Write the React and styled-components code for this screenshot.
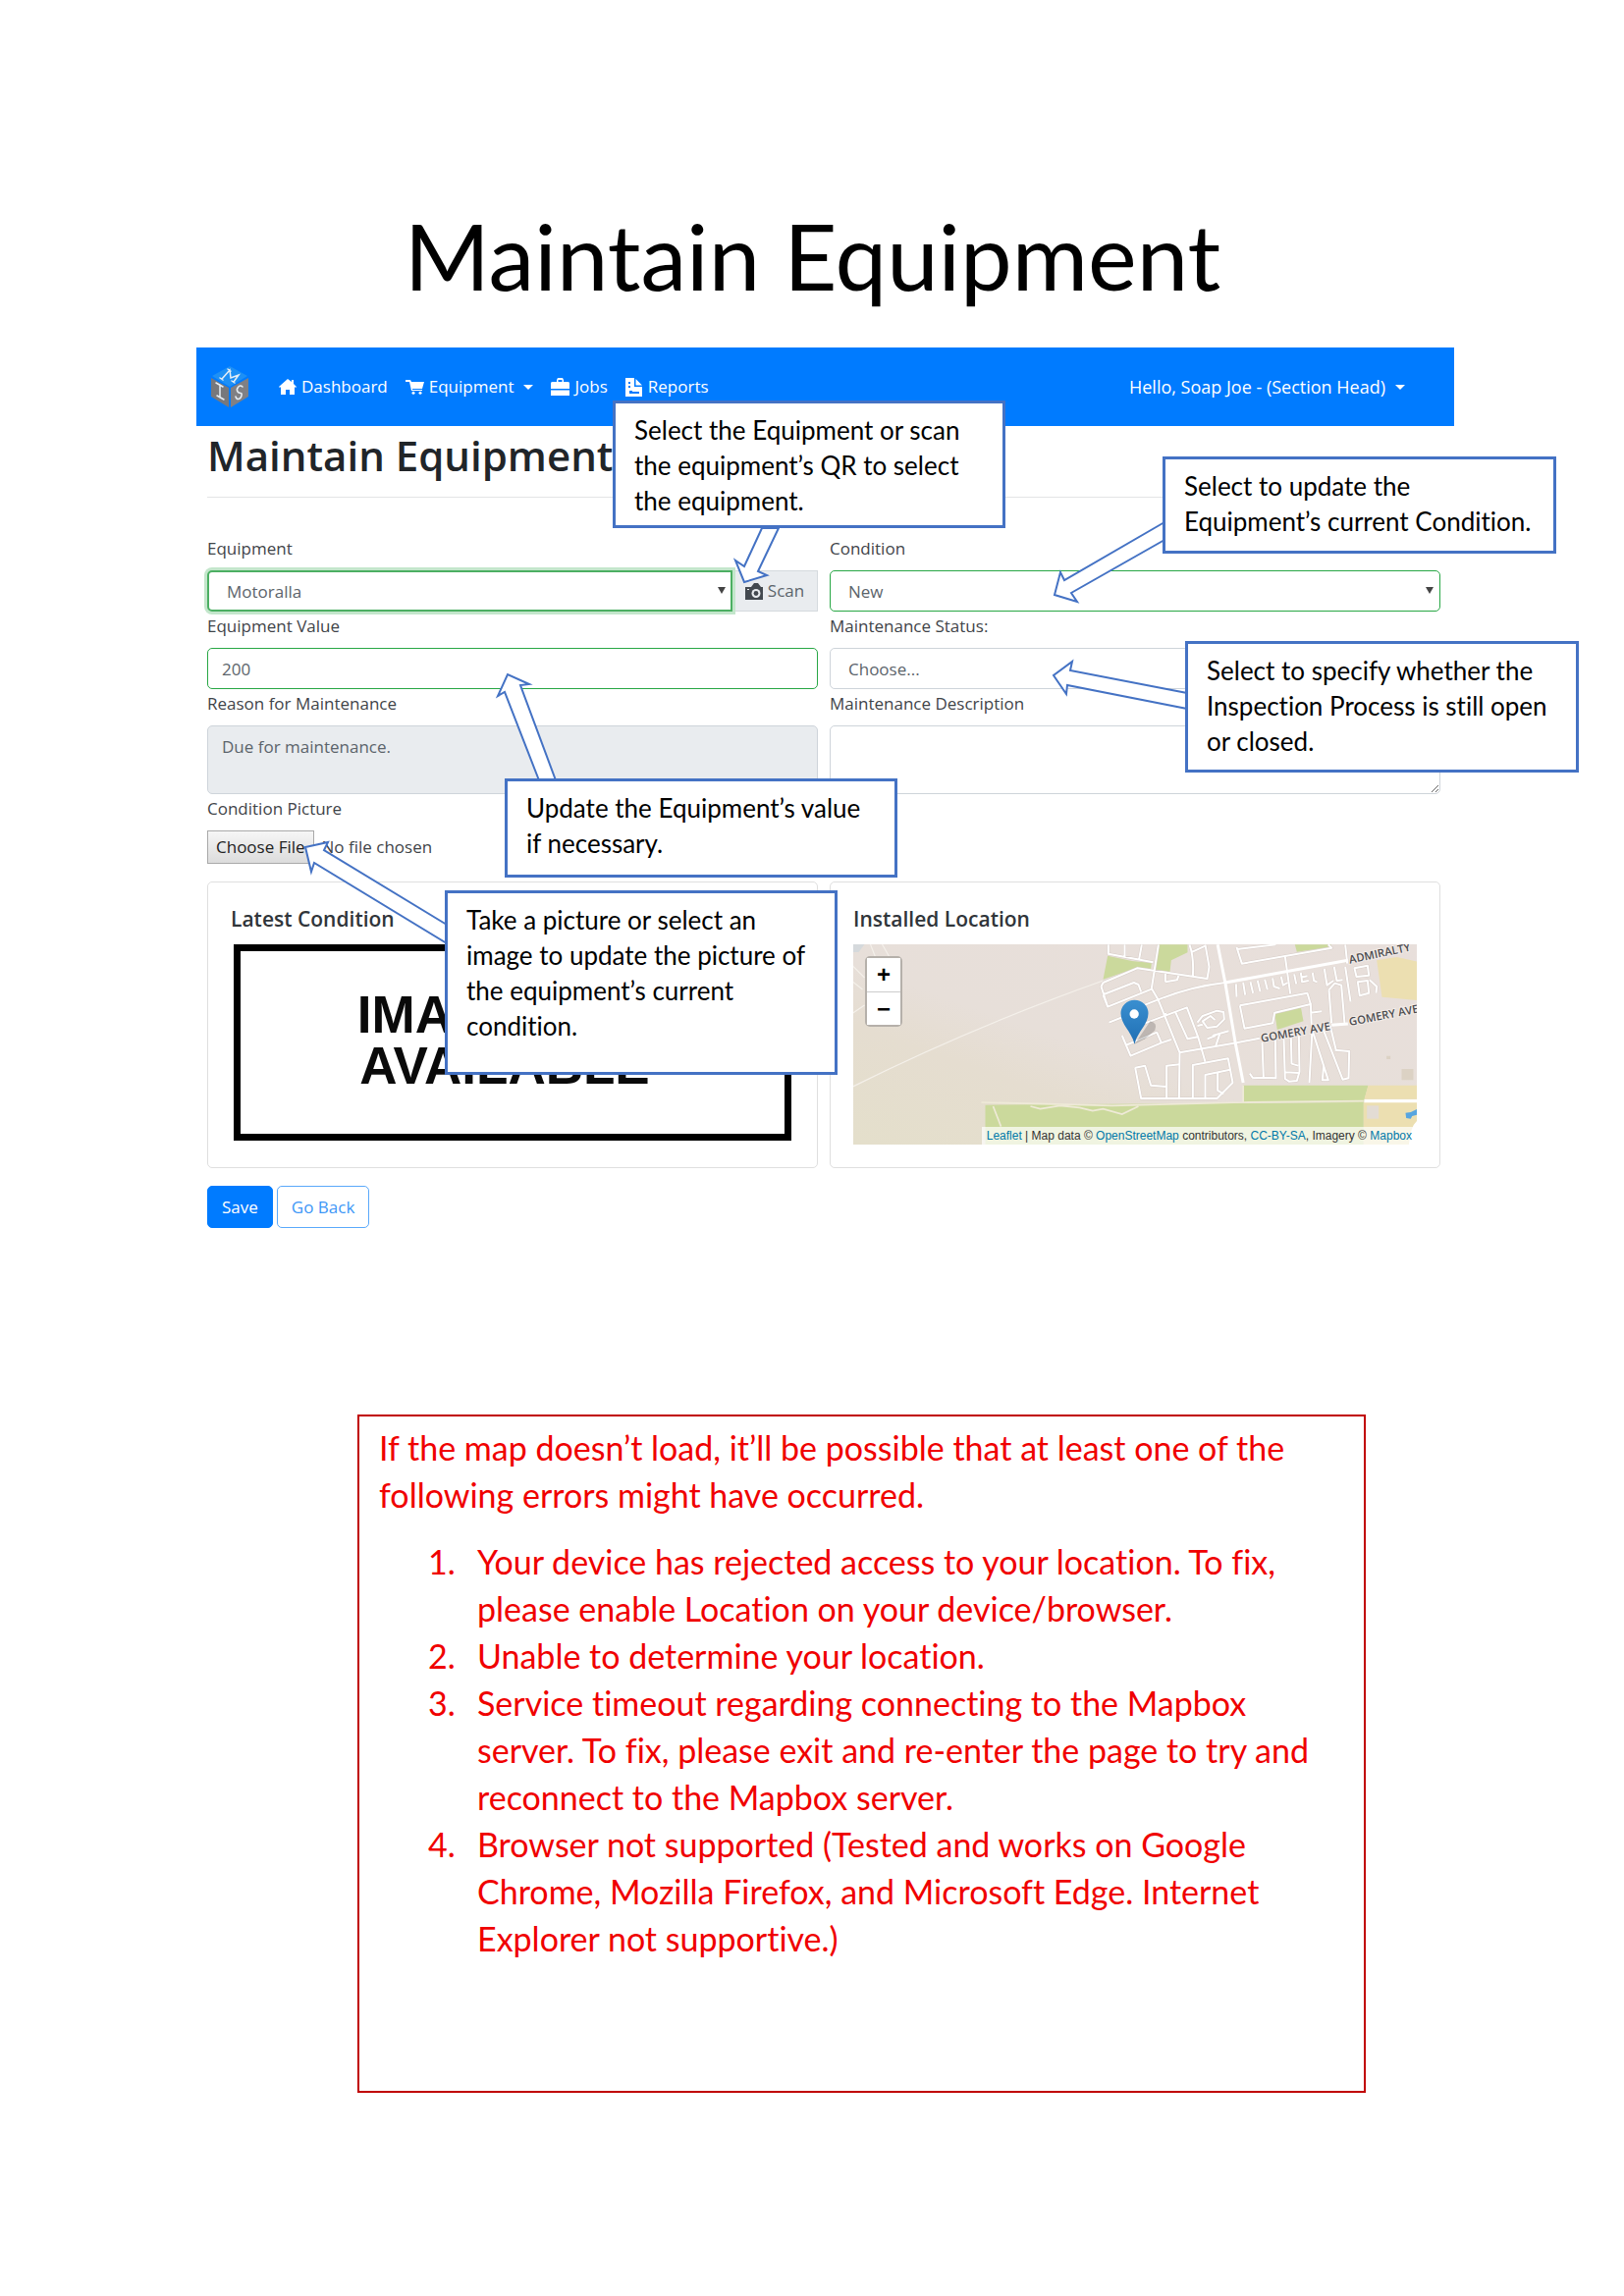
import React from "react";
import styled, { createGlobalStyle, css } from "styled-components";

const GlobalStyle = createGlobalStyle`
  *, *::before, *::after { box-sizing: border-box; }
  body {
    margin: 0;
    background: #fff;
    color: #212529;
    font-family: "Open Sans", "Noto Sans", sans-serif;
  }
`;

const docFont = css`
  font-family: Lato, "Open Sans", sans-serif;
  font-variant-ligatures: none;
`;

/* ---------- document ---------- */
const Page = styled.main`
  padding: 192px 173px 207px 200px;
`;
const DocTitle = styled.h1`
  ${docFont}
  margin: 0 0 26px;
  padding-right: 26px;
  font-size: 94px;
  line-height: 136px;
  font-weight: 400;
  text-align: center;
  color: #000;
`;
const Shot = styled.section`
  position: relative;
`;

/* ---------- navigation ---------- */
const NavBar = styled.nav`
  display: flex;
  align-items: center;
  height: 80px;
  padding: 0 50px 0 15px;
  background: #007bff;
`;
const NavList = styled.div`
  display: flex;
  align-items: center;
  gap: 18px;
  flex: 1;
  margin-left: 31px;
`;
const NavLink = styled.a`
  display: inline-flex;
  align-items: center;
  gap: 5px;
  color: #fff;
  font-size: ${(p) => (p.$large ? 18 : 17)}px;
  line-height: 26px;
  text-decoration: none;
  white-space: nowrap;
`;
const Caret = styled.span`
  margin-left: 5px;
  border: 5px solid transparent;
  border-top-color: #fff;
  border-bottom: 0;
`;

/* ---------- form ---------- */
const Content = styled.div`
  padding: 0 14px 0 11px;
`;
const Heading = styled.h2`
  margin: 0 0 12px;
  font-size: 42px;
  line-height: 60px;
  font-weight: 600;
`;
const Rule = styled.hr`
  height: 1px;
  margin: 0 0 37px;
  border: 0;
  background: #e3e4e5;
`;
const Columns = styled.div`
  display: grid;
  grid-template-columns: 1fr 1fr;
  column-gap: 12px;
`;
const Label = styled.label`
  display: block;
  margin-bottom: 7px;
  font-size: 17px;
  line-height: 30px;
  color: #3f4449;
`;
const Group = styled.div`
  display: flex;
`;
const controlStyle = css`
  display: block;
  width: 100%;
  margin: 0;
  border: 1px solid ${(p) => (p.$valid ? "#28a745" : "#ced4da")};
  border-radius: 5px;
  background: #fff;
  color: #5c646b;
  font: 17px/24px "Open Sans", "Noto Sans", sans-serif;
  outline: 0;
`;
const SelectBox = styled.div`
  position: relative;
  flex: 1;
  &::after {
    content: "";
    position: absolute;
    right: 7px;
    top: 17px;
    border: 4px solid transparent;
    border-top: 7px solid #444;
    border-bottom: 0;
  }
`;
const Select = styled.select`
  ${controlStyle}
  appearance: none;
  height: 42px;
  padding: 2px 18px 0;
  ${(p) =>
    p.$focused &&
    css`
      border-width: 2px;
      border-color: #4caf63;
      border-radius: 5px 0 0 5px;
      box-shadow: 0 0 0 3px #c3e6cb;
    `}
`;
const Input = styled.input`
  ${controlStyle}
  height: 42px;
  padding: 0 14px;
`;
const TextArea = styled.textarea`
  ${controlStyle}
  height: 70px;
  padding: 9px 14px;
  resize: ${(p) => (p.readOnly ? "none" : "vertical")};
  background: ${(p) => (p.readOnly ? "#e9ecef" : "#fff")};
`;
const ScanButton = styled.button`
  display: flex;
  align-items: center;
  justify-content: center;
  gap: 5px;
  width: 87px;
  height: 42px;
  padding: 0;
  border: 1px solid #d5dade;
  border-left: 0;
  background: #e9ecef;
  color: #5c646b;
  font: 17px/24px "Open Sans", "Noto Sans", sans-serif;
`;
const FileInput = styled.input`
  display: block;
  width: 100%;
  height: 34px;
  margin: 0;
  color: #3f4449;
  font: 17px/24px "Open Sans", "Noto Sans", sans-serif;
  &::file-selector-button {
    height: 34px;
    margin: 0 8px 0 0;
    padding: 0 8px;
    border: 1px solid #a9a9a9;
    border-radius: 0;
    background: linear-gradient(#f6f6f6, #dcdcdc);
    color: #222;
    font: 17px/24px "Open Sans", "Noto Sans", sans-serif;
  }
`;

/* ---------- cards ---------- */
const Cards = styled(Columns)`
  margin: 18px 0;
`;
const Card = styled.article`
  padding: 23px;
  border: 1px solid #dfdfdf;
  border-radius: 5px;
`;
const CardTitle = styled.h3`
  margin: 0 0 12px;
  font-size: 21px;
  line-height: 28px;
  font-weight: 600;
  color: #30353a;
`;
const NoImage = styled.div`
  display: flex;
  align-items: center;
  justify-content: center;
  height: 200px;
  margin: 2px 3px;
  padding: 0 16px 4px 0;
  border: 7px solid #000;
  color: #0a0a0a;
  font: 700 53px/52px "Liberation Sans", Arial, sans-serif;
  text-align: center;
`;
const MapBox = styled.div`
  position: relative;
  height: 204px;
  overflow: hidden;
`;
const ZoomControl = styled.div`
  position: absolute;
  left: 12px;
  top: 12px;
  display: flex;
  flex-direction: column;
  border: 2px solid #b5b0aa;
  border-radius: 5px;
`;
const ZoomButton = styled.button`
  width: 34px;
  height: 34px;
  padding: 0;
  border: 0;
  background: #fff;
  color: #000;
  font: 700 24px/32px "Liberation Sans", Arial, sans-serif;
  & + & {
    border-top: 1px solid #ccc;
  }
`;
const Attribution = styled.div`
  position: absolute;
  right: 0;
  bottom: 0;
  padding: 0 5px;
  background: rgba(255, 255, 255, 0.7);
  color: #333;
  font: 12px/18px "Liberation Sans", Arial, sans-serif;
  white-space: nowrap;
  a {
    color: #0078a8;
    text-decoration: none;
  }
`;

const Actions = styled.div`
  display: flex;
  gap: 4px;
`;
const Button = styled.button`
  height: 43px;
  padding: 0 14px;
  border: 1px solid ${(p) => (p.$primary ? "#007bff" : "#5aa9fb")};
  border-radius: 5px;
  background: ${(p) => (p.$primary ? "#007bff" : "#fff")};
  color: ${(p) => (p.$primary ? "#fff" : "#3d97f7")};
  font: 17px/24px "Open Sans", "Noto Sans", sans-serif;
`;

/* ---------- annotations ---------- */
const Arrows = styled.svg`
  position: absolute;
  left: 0;
  top: 0;
  overflow: visible;
  pointer-events: none;
`;
const Callout = styled.aside`
  ${docFont}
  position: absolute;
  left: ${(p) => p.$x}px;
  top: ${(p) => p.$y}px;
  width: ${(p) => p.$w}px;
  height: ${(p) => p.$h}px;
  padding: 9px 19px;
  border: 3px solid #4472c4;
  background: #fff;
  color: #000;
  font-size: 26px;
  line-height: 36px;
  white-space: nowrap;
`;
const Notice = styled.section`
  ${docFont}
  margin: 190px 90px 0 164px;
  min-height: 691px;
  padding: 8px 20px;
  border: 2px solid #c00000;
  color: #f00000;
  font-size: 34px;
  line-height: 48px;
  p {
    margin: 0 0 20px;
  }
  ol {
    margin: 0;
    padding-left: 50px;
    list-style: none;
    counter-reset: cause;
  }
  li {
    display: flex;
    counter-increment: cause;
  }
  li::before {
    content: counter(cause) ".";
    flex: 0 0 50px;
  }
`;

const arrowShapes = [
  "776,538 758,577 749,571 758,593 781,586 772,582 793,538",
  "1186,532 1084,591 1080,583 1074,606 1097,613 1091,604 1186,550",
  "1209,706 1090,683 1092,674 1073,688 1086,707 1087,698 1209,722",
  "549,795 514,705 507,709 517,687 539,697 530,698 566,795",
  "455,942 330,866 334,858 311,863 317,888 320,879 455,961",
];

const callouts = [
  { x: 424, y: 54, w: 400, h: 130, lines: ["Select the Equipment or scan", "the equipment’s QR to select", "the equipment."] },
  { x: 984, y: 111, w: 401, h: 99, lines: ["Select to update the", "Equipment’s current Condition."] },
  { x: 1007, y: 299, w: 401, h: 134, lines: ["Select to specify whether the", "Inspection Process is still open", "or closed."] },
  { x: 314, y: 439, w: 400, h: 101, lines: ["Update the Equipment’s value", "if necessary."] },
  { x: 253, y: 553, w: 400, h: 188, lines: ["Take a picture or select an", "image to update the picture of", "the equipment’s current", "condition."] },
];

const Logo = () => (
  <svg width="38" height="42" viewBox="0 0 38 42" role="img" aria-label="MIS">
    <path d="M19 0 37 10 19 21 1 10Z" fill="#1e90f5" />
    <path d="M0 12 18 22V42L0 31Z" fill="#77787c" />
    <path d="M38 12 20 22V42L38 31Z" fill="#808084" />
    <g fill="none" stroke="#e6eef5" strokeWidth="1.5" strokeLinecap="round">
      <path d="M11 13 19 4 20 12 28 9 23 16M17 3l3 2M9 12l3 2M21 15l3 2" />
      <path d="M5 17l7 4M6 30l7 4M9 19v13" />
      <path d="M32 21c-3-3-7 2-5 5s5 0 4 4-5 5-6 1" />
    </g>
  </svg>
);
const HomeIcon = () => (
  <svg width="18" height="18" viewBox="0 0 18 18" fill="#fff" aria-hidden="true">
    <path d="M9 1 0 9l1 1 1-1v8h5v-5h4v5h5V9l1 1 1-1-3-3V2h-2v2Z" />
  </svg>
);
const CartIcon = () => (
  <svg width="19" height="16" viewBox="0 0 19 16" fill="#fff" aria-hidden="true">
    <path d="M0 1h5l1 2h13l-2 7H7v1h10v1H6L4 3H0Z" />
    <circle cx="8" cy="14.300" r="1.500" />
    <circle cx="15" cy="14.300" r="1.500" />
  </svg>
);
const CaseIcon = () => (
  <svg width="19" height="19" viewBox="0 0 19 19" fill="#fff" aria-hidden="true">
    <path fillRule="evenodd" d="M6 4V2l1-2h5l1 2v2h5l1 1v6H0V5l1-1ZM7.500 4h4V2h-4ZM0 12.500h19V18H0Z" />
  </svg>
);
const ReportIcon = () => (
  <svg width="18" height="19" viewBox="0 0 18 19" fill="#fff" aria-hidden="true">
    <path fillRule="evenodd" d="M0 0h9v9h8v10H0ZM3 4v2h2V4ZM3 8v2h2V8ZM4 13v3h10v-2H7v-1Z" />
    <path d="M10.500 1 17 7.500h-6.500Z" />
  </svg>
);
const CameraIcon = () => (
  <svg width="18" height="19" viewBox="0 0 18 19" aria-hidden="true">
    <path d="M0 5h6l3-4h4l3 4h2v13H0Z" fill="#43494f" />
    <circle cx="11" cy="11.500" r="4.500" fill="#e9ecef" />
    <circle cx="11" cy="11.500" r="2.400" fill="#43494f" />
    <path d="M2 7h2v1H2Z" fill="#e9ecef" />
  </svg>
);

const roads = [
  "M388 22V50L525 76M438 22V60M490 22 482 66M541 22 520 156 540 190M372 138 476 94 690 126 696 90 684 22M636 22Q650 60 646 118M684 26 640 46M366 150 386 212 520 158M372 138 366 150M374 174 466 138 480 144 488 166M386 212 372 176M562 136V106M562 136 598 130 604 112",
  "M390 260 440 240M500 206 540 190Q640 150 745 138M540 190 606 352 604 492M606 352 780 322 850 308M500 262 628 214 662 304 630 310 592 226M556 238 566 232M662 304 684 380M430 300 456 362 550 322 536 290 440 330M456 362 550 322 580 312",
  "M660 260 676 240 720 224 740 228 742 250 720 272 690 276 676 256 700 240 714 252M660 270 676 266M706 300 756 286M728 296 716 332M690 310 716 300",
  "M470 398 500 392 518 452 566 456M470 398 488 492H720L768 444 754 370 646 390V492M566 492V392L606 388M684 492V420L760 404M722 414V468L740 478",
  "M780 30 796 80 1070 32 1060 22M928 58 944 172M782 36 900 22M1112 22 1118 80",
  "M790 208 996 170 1006 204 896 230 890 262 804 278 790 208M1006 200 1010 300 1002 444M1006 230 1040 226",
  "M778 142 780 182M800 138 806 176M822 136 830 170M844 132 852 166M866 128 874 160M890 124 894 150 912 156M916 120 922 146 936 138M956 112 962 142M976 108 980 136 1000 132M976 122 996 118M1012 108 1016 132 1026 136M1048 96 1056 146 1076 132M1078 90 1086 132 1104 130M1112 90 1128 196",
  "M1062 160 1080 140 1100 146 1110 264M1062 160 1070 262M1140 94 1180 86 1184 116 1146 120ZM1150 136 1180 132 1184 170 1156 178ZM1186 130 1208 150 1206 170",
  "M858 320 862 428 830 430M830 430 820 416M862 428 900 430 898 300M924 310 928 432 940 440 964 438 972 410 970 300M946 306 948 386 968 392M930 412 970 414M1010 280 1060 436 1042 436 1046 390M1044 280 1104 434 1122 430 1124 348 1080 344M1066 270 1084 346",
];

const StreetMap = () => (
  <svg width="100%" height="204" viewBox="0 0 575 204" preserveAspectRatio="xMidYMid slice" role="img" aria-label="Map of the installed location">
    <defs>
      <linearGradient id="land" x1="0" y1="1" x2="1" y2="0">
        <stop offset="0" stopColor="#e4dfcb" />
        <stop offset="0.300" stopColor="#e5ddd0" />
        <stop offset="0.450" stopColor="#e7dfd9" />
        <stop offset="1" stopColor="#e8dfdb" />
      </linearGradient>
      <linearGradient id="pin" x1="0" y1="0" x2="0" y2="1">
        <stop offset="0" stopColor="#3a8fd0" />
        <stop offset="1" stopColor="#1f6fb4" />
      </linearGradient>
    </defs>
    <rect width="575" height="204" fill="url(#land)" />
    <path d="M0 0h12L6 8H0Z" fill="#d5d9dc" />
    <g fill="none" stroke="#f4f0ea" strokeWidth="1.200">
      <path d="M18 0 25 18M30 0l8 14M0 22l12 12M0 38l10 8M0 145Q120 85 255 37M0 70l12-8" />
    </g>
    <g transform="translate(131 -7) scale(0.33333)">
      <g fill="#cbd99c">
        <path d="M386 56 460 72 520 78 518 96 476 92 372 128Z" />
        <path d="M541 22H630V46L580 70 576 106 530 98Z" />
        <path d="M958 22H1070L1060 30 964 44Z" />
        <path d="M896 228 976 212 984 256 904 282Z" />
        <path d="M800 452H1182L1168 504H800Z" />
        <path d="M12 512 1168 504V640H12Z" />
      </g>
      <path d="M1208 70 1270 60 1332 74V192L1224 182Z" fill="#ecdfb1" />
      <path d="M1182 452H1332V494H1170Z" fill="#ecdfb1" />
      <path d="M1168 504H1332V640H1168Z" fill="#ecdfb1" />
      <path d="M1178 514h36v40h-36Z" fill="#e3dcd4" />
      <path d="M1284 402h36v34h-36ZM1238 362h12v10h-12Z" fill="#dcd2c4" />
      <path d="M1296 536 1312 534 1332 524V542L1316 546 1312 554 1298 552Z" fill="#57a5e0" />
      <path d="M1332 560Q1308 580 1306 640H1332Z" fill="#fff" />
      <path d="M0 504 400 514 800 504 1168 500M800 452V504M36 516 60 578M150 516 180 524 240 514 300 520 340 530 372 524 430 540 480 516" fill="none" stroke="#efead8" strokeWidth="5" />
      <g fill="none" strokeLinejoin="round">
        <g stroke="#d6ccc7" strokeWidth="9">
          {roads.map((d) => <path key={d} d={d} />)}
        </g>
        <g stroke="#fff" strokeWidth="6">
          {roads.map((d) => <path key={d} d={d} />)}
        </g>
        <path d="M722 22 745 138 776 322 800 444M745 138 1120 70M1070 268 1120 264" stroke="#fff" strokeWidth="9" />
        <path d="M1170 500H1332" stroke="#fff" strokeWidth="10" />
      </g>
      <g fill="#4c4c50" stroke="#f3ece8" strokeWidth="6" paintOrder="stroke" fontFamily="Open Sans, sans-serif" fontWeight="600" fontSize="34">
        <text transform="translate(1126 80) rotate(-12)">ADMIRALTY</text>
        <text transform="translate(856 320) rotate(-10)">GOMERY AVE</text>
        <text transform="translate(1126 270) rotate(-11)">GOMERY AVE</text>
      </g>
      <path d="M468 326 516 256Q540 262 530 284L500 310Z" fill="#000" opacity="0.180" />
      <path d="M468 326C458 286 426 266 426 232A42 41 0 0 1 510 232C510 266 478 286 468 326Z" fill="url(#pin)" />
      <circle cx="467" cy="234" r="14" fill="#fff" />
    </g>
  </svg>
);

export default function App() {
  return (
    <>
      <GlobalStyle />
      <Page>
        <DocTitle>Maintain Equipment</DocTitle>
        <Shot>
          <NavBar>
            <Logo />
            <NavList>
              <NavLink href="#dashboard"><HomeIcon />Dashboard</NavLink>
              <NavLink href="#equipment"><CartIcon />Equipment<Caret /></NavLink>
              <NavLink href="#jobs"><CaseIcon />Jobs</NavLink>
              <NavLink href="#reports"><ReportIcon />Reports</NavLink>
            </NavList>
            <NavLink href="#account" $large>Hello, Soap Joe - (Section Head)<Caret /></NavLink>
          </NavBar>
          <Content>
            <Heading>Maintain Equipment</Heading>
            <Rule />
            <Columns>
              <div>
                <Label htmlFor="equipment">Equipment</Label>
                <Group>
                  <SelectBox>
                    <Select id="equipment" $valid $focused defaultValue="Motoralla">
                      <option>Motoralla</option>
                    </Select>
                  </SelectBox>
                  <ScanButton type="button"><CameraIcon />Scan</ScanButton>
                </Group>
                <Label htmlFor="value">Equipment Value</Label>
                <Input id="value" $valid defaultValue="200" />
                <Label htmlFor="reason">Reason for Maintenance</Label>
                <TextArea id="reason" readOnly defaultValue="Due for maintenance." />
                <Label htmlFor="picture">Condition Picture</Label>
                <FileInput id="picture" type="file" />
              </div>
              <div>
                <Label htmlFor="condition">Condition</Label>
                <SelectBox>
                  <Select id="condition" $valid defaultValue="New">
                    <option>New</option>
                  </Select>
                </SelectBox>
                <Label htmlFor="status">Maintenance Status:</Label>
                <SelectBox>
                  <Select id="status" defaultValue="Choose...">
                    <option>Choose...</option>
                  </Select>
                </SelectBox>
                <Label htmlFor="description">Maintenance Description</Label>
                <TextArea id="description" />
              </div>
            </Columns>
            <Cards>
              <Card>
                <CardTitle>Latest Condition</CardTitle>
                <NoImage>IMAGE NOT<br />AVAILABLE</NoImage>
              </Card>
              <Card>
                <CardTitle>Installed Location</CardTitle>
                <MapBox>
                  <StreetMap />
                  <ZoomControl>
                    <ZoomButton type="button" aria-label="Zoom in">+</ZoomButton>
                    <ZoomButton type="button" aria-label="Zoom out">−</ZoomButton>
                  </ZoomControl>
                  <Attribution>
                    <a href="#leaflet">Leaflet</a> | Map data © <a href="#osm">OpenStreetMap</a> contributors,{" "}
                    <a href="#license">CC-BY-SA</a>, Imagery © <a href="#mapbox">Mapbox</a>
                  </Attribution>
                </MapBox>
              </Card>
            </Cards>
            <Actions>
              <Button type="button" $primary>Save</Button>
              <Button type="button">Go Back</Button>
            </Actions>
          </Content>
          <Arrows width="1281" height="900" viewBox="200 354 1281 900" aria-hidden="true">
            {arrowShapes.map((points) => (
              <polygon key={points} points={points} fill="#fff" stroke="#4472c4" strokeWidth="2" />
            ))}
          </Arrows>
          {callouts.map((c) => (
            <Callout key={c.lines[0]} $x={c.x} $y={c.y} $w={c.w} $h={c.h}>
              {c.lines.map((line) => <div key={line}>{line}</div>)}
            </Callout>
          ))}
        </Shot>
        <Notice>
          <p>If the map doesn’t load, it’ll be possible that at least one of the following errors might have occurred.</p>
          <ol>
            <li>Your device has rejected access to your location. To fix, please enable Location on your device/browser.</li>
            <li>Unable to determine your location.</li>
            <li>Service timeout regarding connecting to the Mapbox server. To fix, please exit and re-enter the page to try and reconnect to the Mapbox server.</li>
            <li>Browser not supported (Tested and works on Google Chrome, Mozilla Firefox, and Microsoft Edge. Internet Explorer not supportive.)</li>
          </ol>
        </Notice>
      </Page>
    </>
  );
}
